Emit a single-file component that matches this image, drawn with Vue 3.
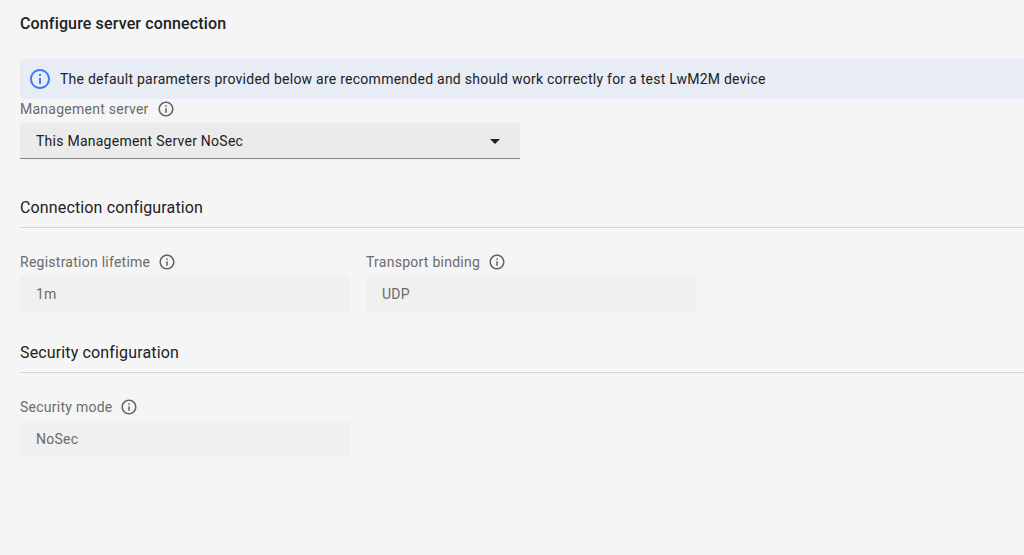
<script setup>
import { ref } from 'vue'

const server = ref('nosec')
const connection = [
  { id: 'lifetime', label: 'Registration lifetime', value: '1m' },
  { id: 'binding', label: 'Transport binding', value: 'UDP' },
]
const security = [{ id: 'mode', label: 'Security mode', value: 'NoSec' }]
const sections = [
  { title: 'Connection configuration', fields: connection },
  { title: 'Security configuration', fields: security },
]
const infoPath = 'M11 7h2v2h-2zm0 4h2v6h-2zm1-9C6.48 2 2 6.48 2 12s4.480 10 10 10 10-4.480 10-10S17.520 2 12 2zm0 18c-4.410 0-8-3.590-8-8s3.590-8 8-8 8 3.590 8 8-3.590 8-8 8z'
</script>

<template>
  <main class="page">
    <h1>Configure server connection</h1>
    <p class="notice">
      <svg class="notice-icon" viewBox="0 0 24 24" aria-hidden="true"><path :d="infoPath" /></svg>
      <span>The default parameters provided below are recommended and should work correctly for a test LwM2M device</span>
    </p>
    <div class="field server">
      <div class="caption">
        <label for="server">Management server</label>
        <svg class="info" viewBox="0 0 24 24" aria-hidden="true"><path :d="infoPath" /></svg>
      </div>
      <div class="select-box">
        <select id="server" v-model="server">
          <option value="nosec">This Management Server NoSec</option>
        </select>
        <svg class="arrow" viewBox="0 0 10 5" aria-hidden="true"><path d="M0 0h10L5 5z" /></svg>
      </div>
    </div>
    <section v-for="section in sections" :key="section.title">
      <h2>{{ section.title }}</h2>
      <div class="row">
        <div v-for="field in section.fields" :key="field.id" class="field">
          <div class="caption">
            <label :for="field.id">{{ field.label }}</label>
            <svg class="info" viewBox="0 0 24 24" aria-hidden="true"><path :d="infoPath" /></svg>
          </div>
          <input :id="field.id" type="text" :value="field.value" disabled />
        </div>
      </div>
    </section>
  </main>
</template>

<style>
body {
  background: #f5f5f5;
}
</style>

<style scoped>
.page {
  padding: 12px 0 20px 20px;
  font: 14px/20px Roboto, sans-serif;
  letter-spacing: 0.018em;
  color: #212121;
}
h1 {
  margin: 0 0 23px;
  font-size: 16px;
  line-height: 24px;
  font-weight: 500;
  letter-spacing: 0.009em;
}
.notice {
  display: flex;
  align-items: center;
  gap: 8px;
  margin: 0;
  padding: 8px;
  background: #e8ecf5;
  border-radius: 4px 0 0 4px;
}
.notice-icon {
  flex: none;
  width: 24px;
  height: 24px;
  fill: #407cff;
}
.caption {
  display: flex;
  align-items: center;
  gap: 8px;
  height: 20px;
  margin-bottom: 4px;
  color: #6b6b6b;
}
.info {
  width: 18px;
  height: 18px;
  fill: #626262;
}
.field {
  flex: 0 1 330px;
}
.server {
  max-width: 500px;
}
.select-box {
  position: relative;
}
select,
input {
  display: block;
  box-sizing: border-box;
  width: 100%;
  height: 36px;
  margin: 0;
  padding: 0 16px;
  border: 0;
  border-radius: 4px;
  font: inherit;
  letter-spacing: inherit;
}
select {
  appearance: none;
  border-bottom: 1px solid #858585;
  border-radius: 4px 4px 0 0;
  background: #ebebeb;
  color: #212121;
}
.arrow {
  position: absolute;
  top: 16px;
  right: 20px;
  width: 10px;
  height: 5px;
  fill: #212121;
}
input {
  background: #f0f0f0;
  color: #6b6b6b;
}
section {
  padding-top: 30px;
}
.server + section {
  padding-top: 38px;
}
h2 {
  margin: 0 0 24px;
  padding-bottom: 9px;
  border-bottom: 1px solid #d6d6d6;
  font-size: 16px;
  line-height: 21px;
  font-weight: 400;
  letter-spacing: 0.009em;
}
.row {
  display: flex;
  gap: 16px;
}
</style>
